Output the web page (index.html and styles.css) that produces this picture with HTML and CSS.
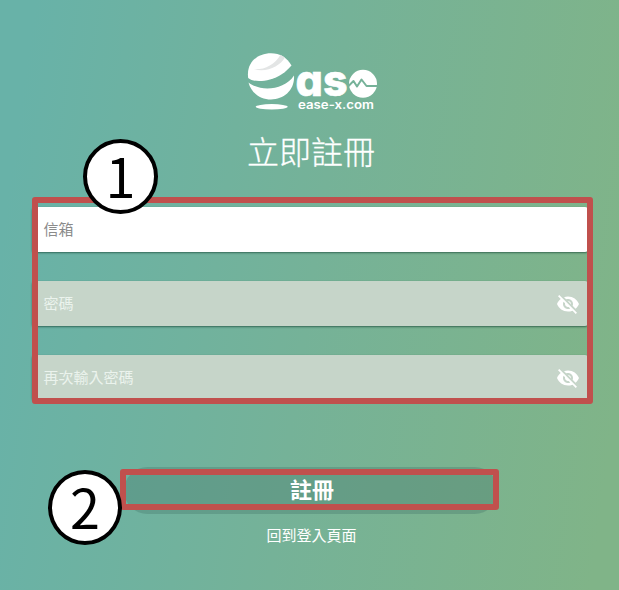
FILE: index.html
```
<!DOCTYPE html>
<html lang="zh-Hant">
<head>
<meta charset="utf-8">
<title>立即註冊</title>
<link rel="stylesheet" href="styles.css">
</head>
<body>
<main class="page">
  <svg class="logo" viewBox="247 52 132 60" role="img" aria-label="ease">
    <path class="ink" d="M248.200 78C246 63 257 53.200 271 53.200C280 53.200 287 57.500 291.500 65.500C286 72 279 77 270 79.500C261 82 252 81.500 248.200 78Z"/>
    <path class="swoosh" d="M254 69.300C264 70 275 65 280.500 54.800L285 57.500C280 66 267 73 254 69.300Z"/>
    <path class="ink" d="M248.500 82.500C259 91.500 284 91 294 75.500C295 90 284 99.500 271 99.500C260 99.500 251 92.500 248.500 82.500Z"/>
    <ellipse class="ink" cx="271.700" cy="106.800" rx="16" ry="2.700"/>
    <text class="logo-name" x="295.500" y="96.300" textLength="52" lengthAdjust="spacingAndGlyphs">as</text>
    <circle class="ink" cx="363" cy="83.800" r="14"/>
    <path class="pulse" d="M348 86.500L353.500 81L357 86.500L361.500 79.500L366.500 86H379"/>
    <text class="logo-url" x="298" y="109.400" textLength="76" lengthAdjust="spacingAndGlyphs">ease-x.com</text>
  </svg>
  <h1 class="title">立即註冊</h1>
  <form class="form">
    <div class="field field-active"><span>信箱</span></div>
    <div class="field"><span>密碼</span>
      <svg class="eye" viewBox="0 0 24 24"><path d="M12 7c2.760 0 5 2.240 5 5 0 .65-.13 1.260-.36 1.830l2.920 2.920c1.510-1.260 2.700-2.890 3.430-4.750-1.730-4.390-6-7.500-11-7.500-1.400 0-2.740.25-3.980.7l2.160 2.160C10.740 7.130 11.350 7 12 7zM2 4.270l2.280 2.280.46.46C3.080 8.300 1.780 10.020 1 12c1.730 4.390 6 7.500 11 7.500 1.550 0 3.030-.3 4.380-.84l.42.42L19.730 22 21 20.730 3.270 3 2 4.270zM7.530 9.800l1.550 1.550c-.05.21-.08.43-.08.65 0 1.660 1.340 3 3 3 .22 0 .44-.03.65-.08l1.550 1.550c-.67.33-1.410.53-2.200.53-2.760 0-5-2.240-5-5 0-.79.2-1.530.53-2.200zm4.310-.78l3.150 3.150.02-.16c0-1.660-1.340-3-3-3l-.17.01z"/></svg>
    </div>
    <div class="field"><span>再次輸入密碼</span>
      <svg class="eye" viewBox="0 0 24 24"><path d="M12 7c2.760 0 5 2.240 5 5 0 .65-.13 1.260-.36 1.830l2.920 2.920c1.510-1.260 2.700-2.890 3.430-4.750-1.730-4.390-6-7.500-11-7.500-1.400 0-2.740.25-3.980.7l2.160 2.160C10.740 7.130 11.350 7 12 7zM2 4.270l2.280 2.280.46.46C3.080 8.300 1.780 10.020 1 12c1.730 4.390 6 7.500 11 7.500 1.550 0 3.030-.3 4.380-.84l.42.42L19.730 22 21 20.730 3.270 3 2 4.270zM7.530 9.800l1.550 1.550c-.05.21-.08.43-.08.65 0 1.660 1.340 3 3 3 .22 0 .44-.03.65-.08l1.550 1.550c-.67.33-1.410.53-2.200.53-2.760 0-5-2.240-5-5 0-.79.2-1.530.53-2.200zm4.310-.78l3.150 3.150.02-.16c0-1.660-1.340-3-3-3l-.17.01z"/></svg>
    </div>
    <button class="submit" type="button">註冊</button>
  </form>
  <a class="back">回到登入頁面</a>

  <div class="frame frame-fields"></div>
  <div class="frame frame-submit"></div>
  <div class="step step-one">1</div>
  <div class="step step-two">2</div>
</main>
</body>
</html>
```

FILE: styles.css
```
* { box-sizing: border-box; }
body { margin: 0; font-family: "Noto Sans CJK TC", sans-serif; }
.page {
  position: relative;
  display: flex;
  flex-direction: column;
  align-items: center;
  width: 619px;
  height: 590px;
  padding-top: 52px;
  overflow: hidden;
  color: #fff;
  background: linear-gradient(98deg, #68b2a8 5%, #75b298 50%, #80b488 96%);
}
.logo { width: 132px; height: 60px; margin-left: 7px; flex: none; }
.ink { fill: #fff; }
.swoosh { fill: #e3e5e5; }
.pulse { fill: none; stroke: #76b299; stroke-width: 2; stroke-linejoin: round; }
.logo-name {
  font: 800 44px Inter, sans-serif;
  font-feature-settings: "cv11";
  fill: #fff;
  stroke: #fff;
  stroke-width: .6;
}
.logo-url { font: 600 12px Inter, sans-serif; fill: #fff; }
.title {
  margin: 14px 0 0 3px;
  font-size: 32px;
  font-weight: 300;
  line-height: 48px;
  -webkit-text-stroke: .3px #fff;
}
.form {
  display: flex;
  flex-direction: column;
  gap: 29px;
  width: 556px;
  margin-top: 33px;
}
.field {
  display: flex;
  align-items: center;
  justify-content: space-between;
  height: 45px;
  padding: 0 8px 0 12px;
  border-radius: 3px;
  background: #c6d5c9;
  color: #ebf3ed;
  font-size: 15px;
  box-shadow: 0 1px 2px rgba(20, 65, 50, .65);
}
.field span { padding-bottom: 2px; }
.field-active { background: #fff; color: #8b8b8b; }
.eye { width: 24px; height: 24px; fill: #fff; }
.submit {
  align-self: center;
  width: 374px;
  height: 47px;
  margin: 38px 0 0 2px;
  padding: 0 0 5px 3px;
  border: 0;
  border-radius: 24px;
  background: rgba(70, 118, 105, .35);
  color: #fff;
  font: 700 22px/40px "Noto Sans CJK TC", sans-serif;
}
.back { margin: 9px 0 0 4px; font-size: 15px; line-height: 24px; }
.frame { position: absolute; border: 6px solid #c0504d; border-radius: 3px; }
.frame-fields { left: 32px; top: 197px; width: 561px; height: 207px; }
.frame-submit { left: 120px; top: 469px; width: 379px; height: 41px; }
.step {
  position: absolute;
  width: 75px;
  height: 75px;
  border: 4px solid #000;
  border-radius: 50%;
  background: #fff;
  color: #000;
  font-size: 54px;
  line-height: 63px;
  text-align: center;
}
.step-one { left: 83px; top: 139px; }
.step-two { left: 48px; top: 470px; width: 74px; }
```
